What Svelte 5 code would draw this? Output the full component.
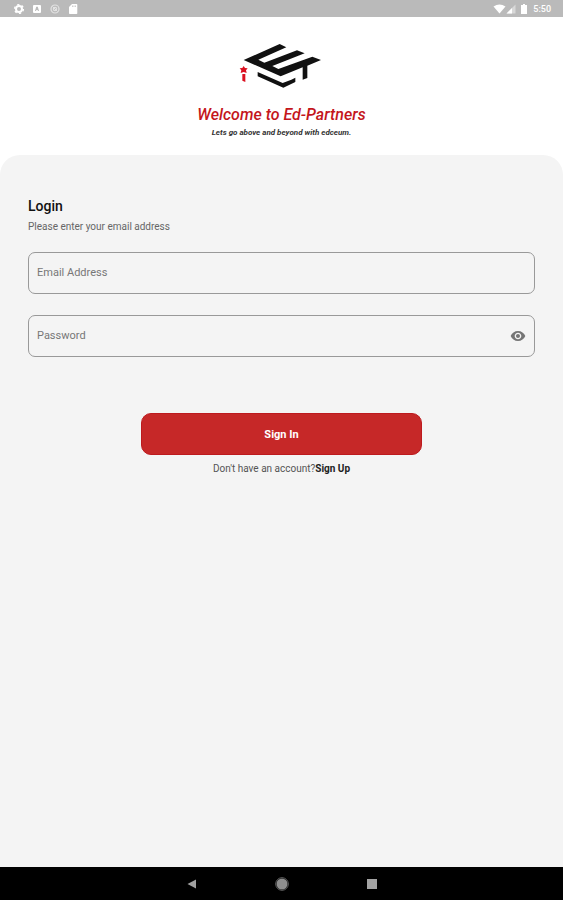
<script>
  let email = $state('');
  let password = $state('');
  let visible = $state(false);
</script>

<div class="screen">
  <div class="status">
    <div class="group notices">
      <svg width="12" height="12" viewBox="0 0 12 12" fill="none" stroke="#fff">
        <circle cx="6" cy="6" r="3" stroke-width="2" />
        <circle cx="6" cy="6" r="4.4" stroke-width="1.4" stroke-dasharray="2.2 2.4" />
      </svg>
      <svg width="12" height="12" viewBox="0 0 12 12">
        <path fill="#fff" fill-rule="evenodd" d="M3 2h6q1 0 1 1v6q0 1-1 1H3q-1 0-1-1V3q0-1 1-1zM5.2 3.8 4 8h1l.4-1h1.2L7 8h1L6.800 3.800z" />
      </svg>
      <svg width="12" height="12" viewBox="0 0 12 12" fill="none" stroke="#e2e2e2">
        <circle cx="6" cy="6" r="4" stroke-width="1.200" />
        <circle cx="6" cy="6" r="1.600" stroke-width="1.200" />
        <path d="m3.500 3.500 5 5" />
      </svg>
      <svg width="12" height="12" viewBox="0 0 12 12">
        <path fill="#fff" d="M5 1h4.500q.8 0 .8.8v8.400q0 .8-.8.8h-6.700q-.8 0-.8-.8V4z" />
        <path stroke="#bbb" stroke-width=".7" d="M5.500 2.500v1.500M7 2.500v1.500M8.500 2.500v1.500" />
      </svg>
    </div>
    <div class="group system">
      <svg width="13" height="12" viewBox="0 0 13 12"><path fill="#fff" d="M.5 3.500Q6.500-.5 12.500 3.500L6.500 10.500z" /></svg>
      <svg width="10" height="12" viewBox="0 0 10 12">
        <path fill="#d8d8d8" d="M9.500 1.500v9H.5z" /><path fill="#fff" d="M6 5v5.500H.5z" />
      </svg>
      <svg class="battery" width="8" height="12" viewBox="0 0 8 12"><path fill="#fff" d="M3 1h2v1h2v9H1V2h2z" /></svg>
      <span>5:50</span>
    </div>
  </div>

  <header>
    <svg class="logo" width="100" height="60" viewBox="5 0 300 180" aria-label="Ed-Partners">
      <path fill="#111" d="M40 72 148 24 168 34 84 71 102 80 200 43 223 52 126 90 144 99 246 62 272 72 231 89V126L217 131V94L151 121z" />
      <path fill="#111" d="M82 108 157 141 183 131 195 125V138L159 155 82 121z" />
      <path fill="#db1020" d="m40 90 4 6 8 1-5 6 2 8-9-3-9 3 2-8-5-6 8-1zM36 114h9v24l-9-4z" />
    </svg>
    <h1>Welcome to Ed-Partners</h1>
    <p>Lets go above and beyond with edceum.</p>
  </header>

  <main>
    <h2>Login</h2>
    <p class="hint">Please enter your email address</p>
    <form onsubmit={(e) => e.preventDefault()}>
      <div class="field">
        <input type="email" aria-label="Email Address" placeholder="Email Address" bind:value={email} />
      </div>
      <div class="field">
        <input type={visible ? 'text' : 'password'} aria-label="Password" placeholder="Password" bind:value={password} />
        <button class="eye" type="button" aria-label="Show password" onclick={() => (visible = !visible)}>
          <svg width="16" height="16" viewBox="0 0 24 24" fill="#757575">
            <path d="M12 4.500C7 4.500 2.730 7.610 1 12c1.730 4.390 6 7.500 11 7.500s9.270-3.110 11-7.500c-1.730-4.390-6-7.500-11-7.500zM12 17c-2.760 0-5-2.240-5-5s2.240-5 5-5 5 2.240 5 5-2.240 5-5 5zm0-8c-1.660 0-3 1.340-3 3s1.340 3 3 3 3-1.340 3-3-1.340-3-3-3z" />
          </svg>
        </button>
      </div>
      <button class="submit" type="submit">Sign In</button>
    </form>
    <p class="signup">Don't have an account?<a href="#signup">Sign Up</a></p>
  </main>

  <nav>
    <button type="button" aria-label="Back">
      <svg width="16" height="16" viewBox="0 0 16 16"><path fill="#a0a0a0" d="M12 3.500v9L3.500 8z" /></svg>
    </button>
    <button type="button" aria-label="Home">
      <svg width="16" height="16" viewBox="0 0 16 16">
        <circle cx="8" cy="8" r="5.500" fill="#8e8e8e" /><circle cx="8" cy="8" r="6.300" fill="none" stroke="#666" />
      </svg>
    </button>
    <button type="button" aria-label="Recent apps">
      <svg width="16" height="16" viewBox="0 0 16 16"><path fill="#a3a3a3" d="M3 3h10v10H3z" /></svg>
    </button>
  </nav>
</div>

<style>
  :global(body) {
    margin: 0;
  }
  .screen {
    display: flex;
    flex-direction: column;
    min-height: 100vh;
    background: #fff;
    color: #111;
    font-family: Roboto, 'Liberation Sans', sans-serif;
  }
  svg {
    display: block;
  }
  h1,
  h2,
  p {
    margin: 0;
  }
  button {
    padding: 0;
    border: 0;
    background: none;
    font-family: inherit;
    cursor: pointer;
  }
  .status {
    display: flex;
    justify-content: space-between;
    height: 17px;
    padding: 0 12px 0 13px;
    background: #bababa;
  }
  .group {
    display: flex;
    align-items: center;
  }
  .notices {
    gap: 6px;
  }
  .system {
    color: #fff;
    font-size: 9px;
    font-weight: 500;
  }
  .battery {
    margin: 0 5px 0 4px;
  }
  header {
    display: flex;
    flex-direction: column;
    align-items: center;
    padding: 19px 16px 16px;
    text-align: center;
  }
  h1 {
    margin-top: 9px;
    color: #c4161c;
    font-size: 16px;
    line-height: 20px;
    font-weight: 500;
    font-style: italic;
  }
  header p {
    margin-top: 2px;
    color: #333;
    font-size: 8px;
    line-height: 12px;
    font-weight: 700;
    font-style: italic;
  }
  main {
    flex: 1;
    padding: 41px 28px;
    border-radius: 20px 20px 0 0;
    background: #f4f4f4;
  }
  h2 {
    font-size: 14px;
    line-height: 20px;
    font-weight: 500;
  }
  .hint {
    margin-top: 4px;
    color: #666;
    font-size: 10px;
    line-height: 14px;
  }
  form {
    display: flex;
    flex-direction: column;
    gap: 21px;
    margin-top: 18px;
  }
  .field {
    display: flex;
    align-items: center;
    box-sizing: border-box;
    height: 42px;
    padding: 0 8px;
    border: 1px solid #999;
    border-radius: 7px;
  }
  .field input {
    flex: 1;
    min-width: 0;
    padding: 0;
    border: 0;
    outline: 0;
    background: none;
    font: 11px/18px Roboto, 'Liberation Sans', sans-serif;
  }
  .field input::placeholder {
    color: #777;
    opacity: 1;
  }
  .submit {
    align-self: center;
    width: 50vw;
    height: 42px;
    margin-top: 35px;
    border: 1px solid #bd1a1e;
    border-radius: 10px;
    background: #c62828;
    color: #fff;
    font-size: 11px;
    font-weight: 700;
  }
  .signup {
    margin-top: 7px;
    color: #555;
    font-size: 10px;
    line-height: 14px;
    text-align: center;
  }
  .signup a {
    color: #222;
    font-weight: 700;
    text-decoration: none;
  }
  nav {
    display: flex;
    justify-content: center;
    align-items: center;
    gap: 74px;
    height: 33px;
    background: #000;
  }
</style>
